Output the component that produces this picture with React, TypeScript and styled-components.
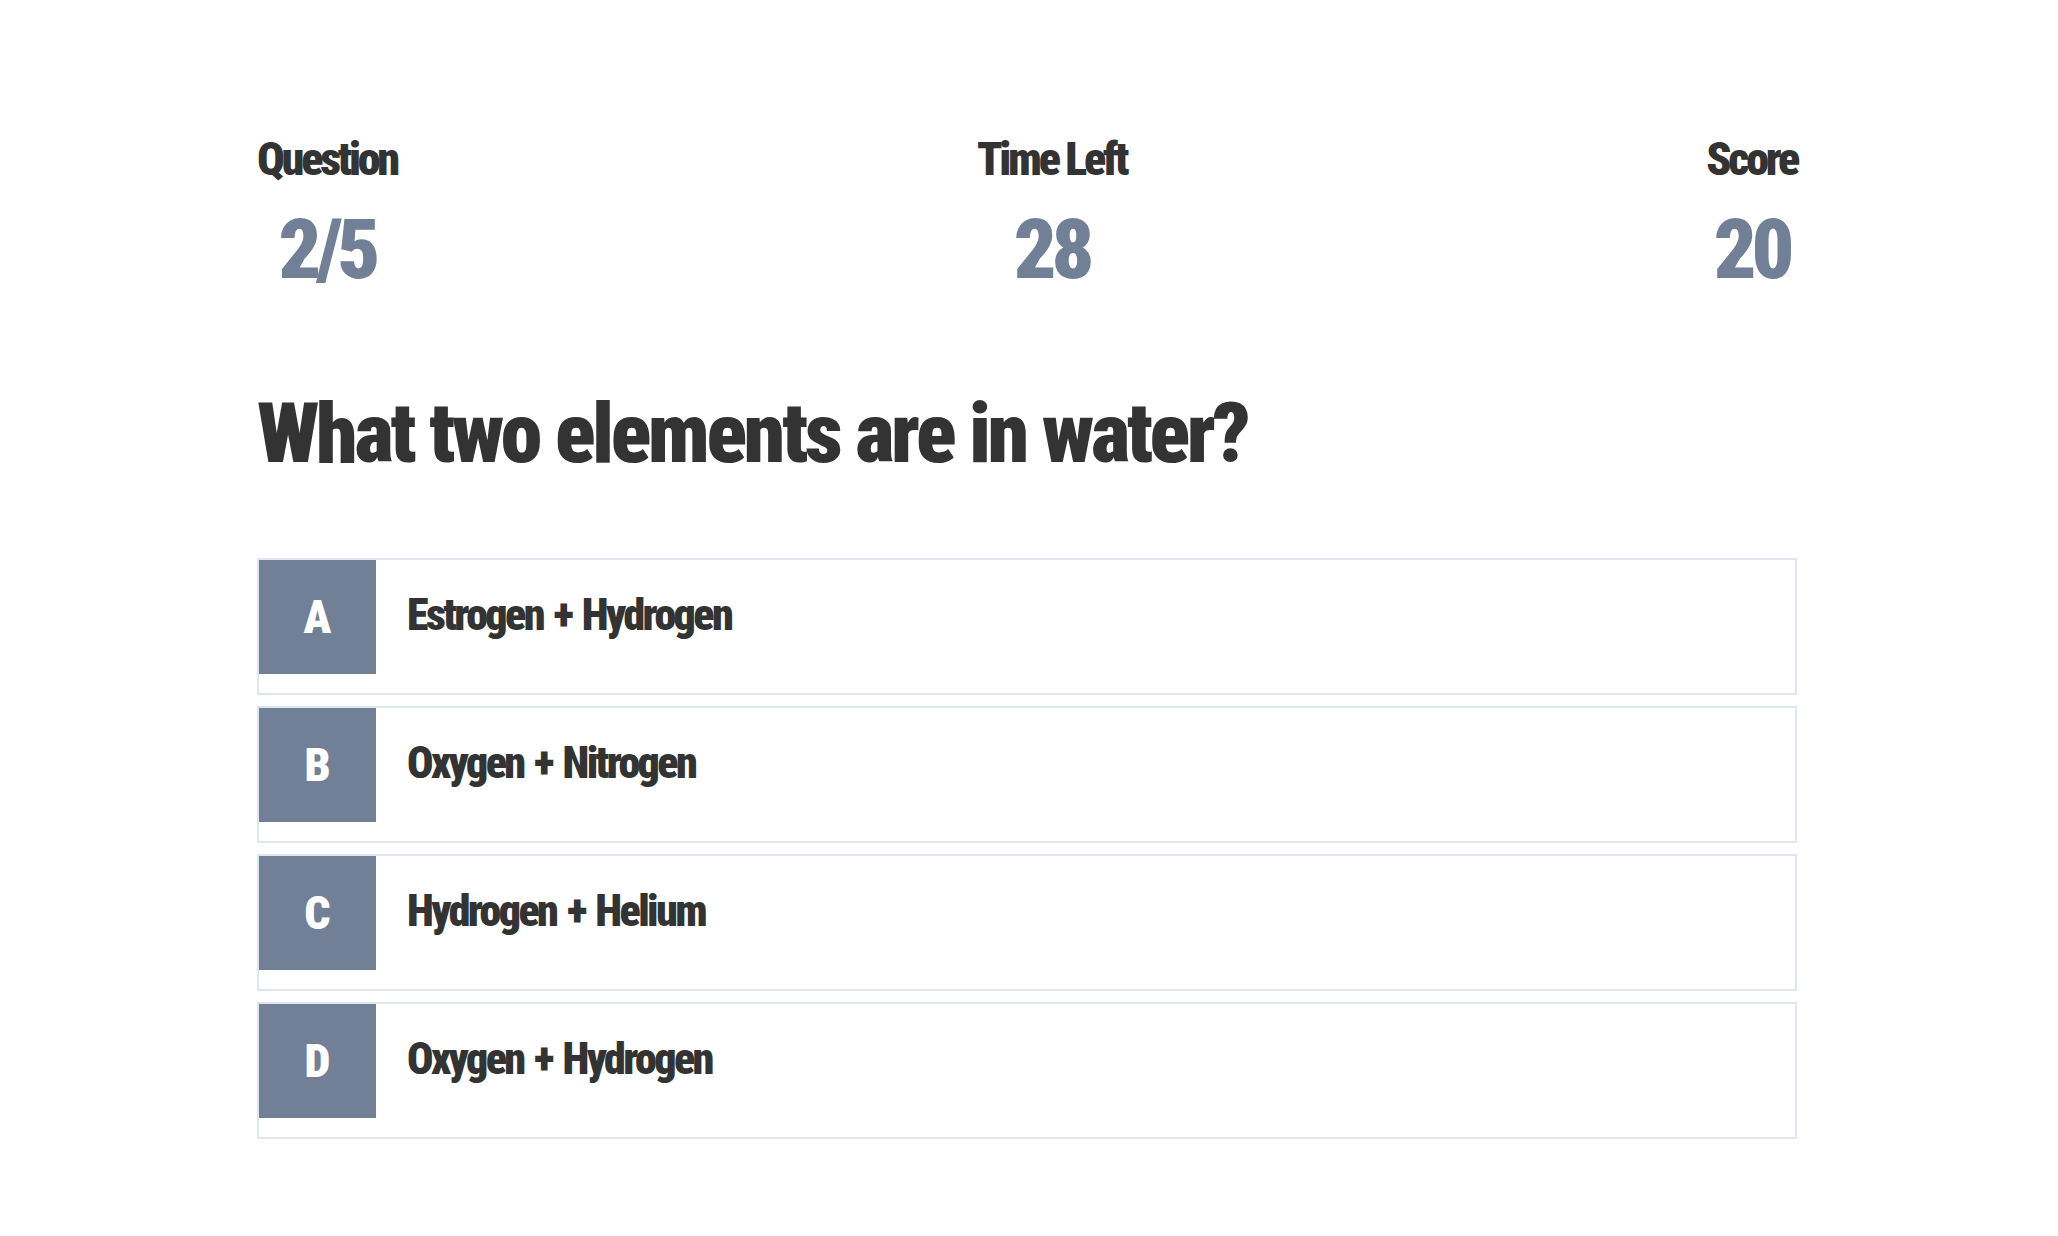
import React from "react";
import styled, { createGlobalStyle } from "styled-components";

const Global = createGlobalStyle`
  html, body { margin: 0; padding: 0; background: #ffffff; }
  body {
    font-family: Roboto, "Open Sans", "DejaVu Sans Condensed", sans-serif;
    font-stretch: 75%;
    font-weight: 900;
    color: #333333;
  }
  * { box-sizing: border-box; }
`;

const Page = styled.div`
  width: 1540px;
  margin: 0 0 0 calc((100% - 1540px) / 2 - 2px);
  padding-top: 136px;
  padding-bottom: 60px;
`;

const Hud = styled.div`
  display: flex;
  justify-content: space-between;
`;

const HudItem = styled.div`
  display: flex;
  flex-direction: column;
  align-items: center;
  gap: 26px;
`;

const HudLabel = styled.div`
  font-size: 46px;
  line-height: 46px;
  letter-spacing: -3.2px;
  color: #333333;
`;

const HudValue = styled.div`
  font-size: 84px;
  line-height: 84px;
  letter-spacing: -5px;
  color: #718096;
`;

const Question = styled.h2`
  margin: 100px 0 82px;
  font-size: 84px;
  line-height: 84px;
  letter-spacing: -3.4px;
  font-weight: 900;
  color: #333333;
`;

const Choices = styled.div`
  display: flex;
  flex-direction: column;
  gap: 11px;
`;

const Choice = styled.div`
  display: flex;
  align-items: flex-start;
  height: 137px;
  border: 2px solid #dde6f1;
  background: #ffffff;
`;

const Prefix = styled.div`
  flex: 0 0 117px;
  height: 114px;
  display: flex;
  align-items: center;
  justify-content: center;
  background: #718096;
  color: #ffffff;
  font-size: 46px;
  line-height: 46px;
`;

const ChoiceText = styled.div`
  padding: 32px 31px 0;
  font-size: 44px;
  line-height: 46px;
  letter-spacing: -2.6px;
  word-spacing: 3px;
  color: #333333;
`;

const choices = [
  { key: "A", text: "Estrogen + Hydrogen" },
  { key: "B", text: "Oxygen + Nitrogen" },
  { key: "C", text: "Hydrogen + Helium" },
  { key: "D", text: "Oxygen + Hydrogen" },
];

export default function App() {
  return (
    <>
      <Global />
      <Page>
        <Hud>
          <HudItem>
            <HudLabel>Question</HudLabel>
            <HudValue>2/5</HudValue>
          </HudItem>
          <HudItem>
            <HudLabel>Time Left</HudLabel>
            <HudValue>28</HudValue>
          </HudItem>
          <HudItem>
            <HudLabel>Score</HudLabel>
            <HudValue>20</HudValue>
          </HudItem>
        </Hud>
        <Question>What two elements are in water?</Question>
        <Choices>
          {choices.map((c) => (
            <Choice key={c.key}>
              <Prefix>{c.key}</Prefix>
              <ChoiceText>{c.text}</ChoiceText>
            </Choice>
          ))}
        </Choices>
      </Page>
    </>
  );
}
